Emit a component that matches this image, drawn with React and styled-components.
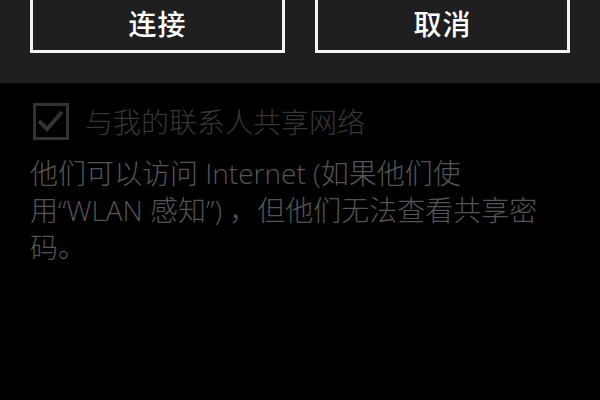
import React from 'react';
import styled, { createGlobalStyle } from 'styled-components';

const GlobalStyle = createGlobalStyle`
  html, body {
    margin: 0;
    padding: 0;
    background: #000;
  }
  body {
    width: 600px;
    height: 400px;
    overflow: hidden;
    font-family: "Open Sans", "Noto Sans CJK SC", sans-serif;
  }
`;

const ButtonBar = styled.div`
  height: 83px;
  background: #1f1f1f;
  display: flex;
  gap: 30px;
  padding: 0 30px;
  box-sizing: border-box;
  overflow: hidden;
`;

const BarButton = styled.button`
  flex: 1;
  height: 56px;
  margin-top: -3px;
  border: 3px solid #f4f4f4;
  background: transparent;
  color: #fff;
  font-family: "Noto Sans CJK SC", sans-serif;
  font-size: 28px;
  font-weight: 500;
  padding: 0 0 4px;
  letter-spacing: 1px;
`;

const CheckRow = styled.label`
  display: flex;
  align-items: center;
  gap: 16px;
  margin: 18px 0 0 33px;
  color: ${(p) => (p.disabled ? '#363636' : '#fff')};
  font-size: 28px;
  font-family: "Noto Sans CJK SC", sans-serif;
  font-weight: 300;
`;

const Box = styled.span`
  width: 36px;
  height: 37px;
  box-sizing: border-box;
  border: 3px solid #333;
  display: flex;
  align-items: center;
  justify-content: center;
`;

const Note = styled.p`
  margin: 14px 0 0 30px;
  width: 525px;
  color: #555;
  font-size: 28px;
  line-height: 37px;
  font-weight: 300;
`;

const CheckIcon = () => (
  <svg width="30" height="30" viewBox="0 0 30 30">
    <path d="M3 15 L11 23 L26 6" fill="none" stroke="#333" strokeWidth="4" />
  </svg>
);

export default function App() {
  return (
    <>
      <GlobalStyle />
      <ButtonBar>
        <BarButton>连接</BarButton>
        <BarButton>取消</BarButton>
      </ButtonBar>
      <CheckRow disabled>
        <Box>
          <CheckIcon />
        </Box>
        与我的联系人共享网络
      </CheckRow>
      <Note>
        他们可以访问 Internet (如果他们使用“WLAN 感知”) ，但他们无法查看共享密码。
      </Note>
    </>
  );
}
